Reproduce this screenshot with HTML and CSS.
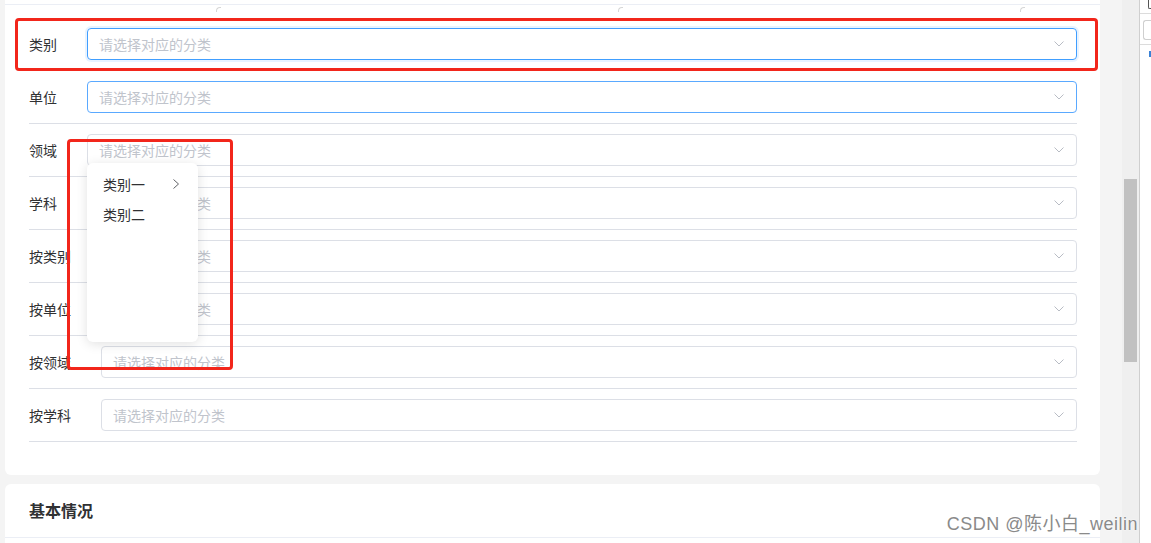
FILE: index.html
```html
<!DOCTYPE html>
<html lang="zh-CN">
<head>
<meta charset="utf-8">
<title>表单</title>
<link rel="stylesheet" href="styles.css">
</head>
<body>
<div class="app">
  <div class="main">
    <section class="card card-form">
      <div class="prev-row"></div>
      <div class="corners"><span class="corner"></span><span class="corner"></span><span class="corner"></span></div>
      <div class="form">
        <div class="row"><span class="label">类别</span><div class="select is-focus"><span class="ph">请选择对应的分类</span><svg class="arrow" viewBox="0 0 10 6" width="10" height="6"><polyline points="0.5,0.5 5,5 9.5,0.5"/></svg></div></div>
        <div class="row"><span class="label">单位</span><div class="select is-hover"><span class="ph">请选择对应的分类</span><svg class="arrow" viewBox="0 0 10 6" width="10" height="6"><polyline points="0.5,0.5 5,5 9.5,0.5"/></svg></div></div>
        <div class="row"><span class="label">领域</span><div class="select"><span class="ph">请选择对应的分类</span><svg class="arrow" viewBox="0 0 10 6" width="10" height="6"><polyline points="0.5,0.5 5,5 9.5,0.5"/></svg></div></div>
        <div class="row"><span class="label">学科</span><div class="select"><span class="ph">请选择对应的分类</span><svg class="arrow" viewBox="0 0 10 6" width="10" height="6"><polyline points="0.5,0.5 5,5 9.5,0.5"/></svg></div></div>
        <div class="row"><span class="label">按类别</span><div class="select"><span class="ph">请选择对应的分类</span><svg class="arrow" viewBox="0 0 10 6" width="10" height="6"><polyline points="0.5,0.5 5,5 9.5,0.5"/></svg></div></div>
        <div class="row"><span class="label">按单位</span><div class="select"><span class="ph">请选择对应的分类</span><svg class="arrow" viewBox="0 0 10 6" width="10" height="6"><polyline points="0.5,0.5 5,5 9.5,0.5"/></svg></div></div>
        <div class="row"><span class="label label-wide">按领域</span><div class="select"><span class="ph">请选择对应的分类</span><svg class="arrow" viewBox="0 0 10 6" width="10" height="6"><polyline points="0.5,0.5 5,5 9.5,0.5"/></svg></div></div>
        <div class="row"><span class="label label-wide">按学科</span><div class="select"><span class="ph">请选择对应的分类</span><svg class="arrow" viewBox="0 0 10 6" width="10" height="6"><polyline points="0.5,0.5 5,5 9.5,0.5"/></svg></div></div>
      </div>
      <div class="popup">
        <div class="opt"><span>类别一</span><svg class="opt-arrow" viewBox="0 0 6 10" width="6" height="10"><polyline points="0.5,0.5 5.5,5 0.5,9.5"/></svg></div>
        <div class="opt"><span>类别二</span></div>
      </div>
      <div class="mark mark-1"></div>
      <div class="mark mark-2"></div>
    </section>
    <section class="card card-basic">
      <h3 class="card-title">基本情况</h3>
    </section>
  </div>
  <div class="scrollbar"><div class="thumb"></div></div>
  <aside class="side">
    <div class="s-box-top"></div>
    <div class="s-line"></div>
    <div class="s-box"></div>
    <div class="s-line"></div>
    <div class="s-dot"></div>
  </aside>
</div>
<div class="watermark">CSDN @陈小白_weilin</div>
</body>
</html>
```
FILE: styles.css
```css
html, body {
  margin: 0;
  padding: 0;
  height: 543px;
  overflow: hidden;
}
body {
  background: #f5f5f5;
  font-family: "Noto Sans CJK SC", "Liberation Sans", sans-serif;
  color: #333;
  position: relative;
}
.app {
  display: flex;
  height: 543px;
}
.main {
  width: 1122px;
  box-sizing: border-box;
  padding: 0 22px 0 5px;
  background: #f4f4f4;
}
.card {
  background: #fff;
  position: relative;
}
.card-form {
  border-radius: 0 0 6px 6px;
  padding-bottom: 33px;
}
.prev-row {
  height: 4px;
  border-bottom: 1px solid #ebeef5;
}
.corners {
  height: 13px;
  display: flex;
  gap: 397px;
  padding-left: 211px;
  box-sizing: border-box;
  padding-top: 2px;
}
.corner {
  width: 4px;
  height: 4px;
  border-top: 1px solid #d6d6d6;
  border-left: 1px solid #d6d6d6;
  border-top-left-radius: 4px;
}
.form {
  padding: 0 23px 0 24px;
}
.row {
  display: flex;
  align-items: center;
  padding: 10px 0;
  border-bottom: 1px solid #dcdfe6;
}
.label {
  width: 58px;
  flex: none;
  font-size: 14px;
  line-height: 20px;
  color: #303133;
}
.label-wide {
  width: 72px;
}
.select {
  flex: 1;
  height: 32px;
  box-sizing: border-box;
  border: 1px solid #dcdfe6;
  border-radius: 4px;
  padding: 0 12px 0 11px;
  display: flex;
  align-items: center;
  justify-content: space-between;
}
.select.is-focus {
  border-color: #409eff;
  box-shadow: 0 0 0 2px rgba(64, 158, 255, 0.12);
}
.select.is-hover {
  border-color: #5aa9ff;
}
.ph {
  font-size: 14px;
  color: #c0c4cc;
}
.arrow polyline {
  fill: none;
  stroke: #b8bcc4;
  stroke-width: 1;
}
.popup {
  position: absolute;
  left: 82px;
  top: 163px;
  width: 111px;
  height: 179px;
  box-sizing: border-box;
  padding-top: 6px;
  background: #fff;
  border-radius: 6px;
  box-shadow: 0 2px 12px rgba(0, 0, 0, 0.12);
}
.opt {
  height: 30px;
  display: flex;
  align-items: center;
  justify-content: space-between;
  padding: 0 19px 0 16px;
  font-size: 14px;
  color: #303133;
}
.opt-arrow polyline {
  fill: none;
  stroke: #606266;
  stroke-width: 1;
}
.mark {
  position: absolute;
  box-sizing: border-box;
  border: 3px solid #f2261b;
  border-radius: 4px;
}
.mark-1 {
  left: 10px;
  top: 18px;
  width: 1083px;
  height: 53px;
}
.mark-2 {
  left: 62px;
  top: 139px;
  width: 166px;
  height: 231px;
}
.card-basic {
  margin-top: 9px;
  border-radius: 6px 6px 0 0;
  height: 120px;
}
.card-title {
  margin: 0;
  padding-left: 24px;
  height: 53px;
  line-height: 53px;
  font-size: 16px;
  font-weight: bold;
  color: #303133;
  border-bottom: 1px solid #ebeef5;
}
.scrollbar {
  width: 17px;
  flex: none;
  background: #efefef;
}
.thumb {
  margin: 179px 0 0 2px;
  width: 13px;
  height: 183px;
  background: #c1c1c1;
}
.side {
  flex: 1;
  background: #fff;
  border-left: 1px solid #cfcfcf;
}
.s-box-top {
  margin-left: 8px;
  height: 8px;
  border: 1px solid #555;
  border-top: none;
  border-right: none;
  border-bottom-left-radius: 2px;
}
.s-line {
  margin-top: 4px;
  border-top: 1px solid #dcdcdc;
}
.s-box {
  margin: 6px 0 0 3px;
  height: 18px;
  border: 1px solid #cfcfcf;
  border-right: none;
  border-radius: 3px 0 0 3px;
}
.s-dot {
  margin: 6px 0 0 9px;
  width: 2px;
  height: 6px;
  background: #3b82d6;
}
.watermark {
  position: absolute;
  right: 13px;
  top: 512px;
  font-family: "Liberation Sans", "Noto Sans CJK SC", sans-serif;
  font-size: 18px;
  letter-spacing: 0.5px;
  line-height: 24px;
  color: #8a8a8a;
  text-shadow: 0 0 2px #fff, 0 0 1px #fff;
  white-space: nowrap;
}
```
